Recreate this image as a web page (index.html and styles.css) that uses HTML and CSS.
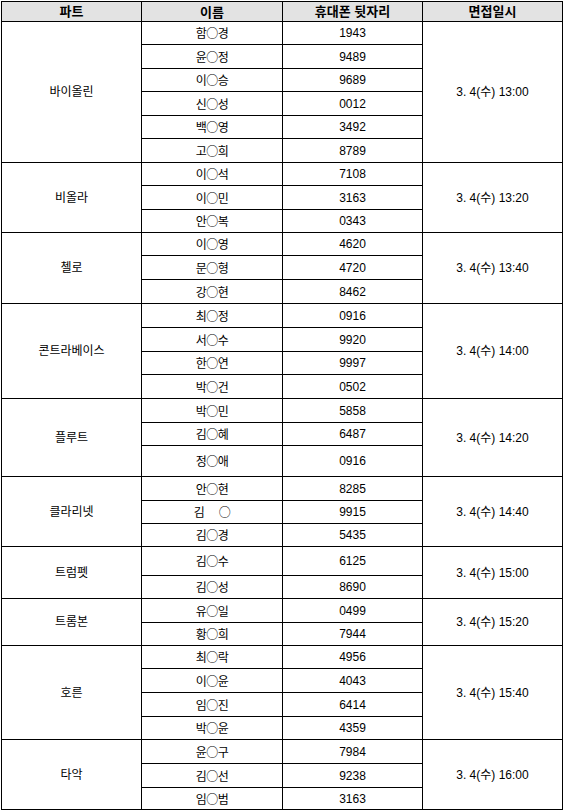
FILE: index.html
```html
<!DOCTYPE html>
<html lang="ko">
<head>
<meta charset="utf-8">
<link rel="stylesheet" href="styles.css">
</head>
<body>
<div class="sheet">
  <div class="c head part">파트</div>
  <div class="c head name">이름</div>
  <div class="c head phone">휴대폰 뒷자리</div>
  <div class="c head time">면접일시</div>

  <div class="c part span6">바이올린</div>
  <div class="c name">함○경</div><div class="c phone">1943</div>
  <div class="c time span6">3. 4(수) 13:00</div>
  <div class="c name">윤○정</div><div class="c phone">9489</div>
  <div class="c name">이○승</div><div class="c phone">9689</div>
  <div class="c name">신○성</div><div class="c phone">0012</div>
  <div class="c name">백○영</div><div class="c phone">3492</div>
  <div class="c name">고○희</div><div class="c phone">8789</div>

  <div class="c part span3">비올라</div>
  <div class="c name">이○석</div><div class="c phone">7108</div>
  <div class="c time span3">3. 4(수) 13:20</div>
  <div class="c name">이○민</div><div class="c phone">3163</div>
  <div class="c name">안○복</div><div class="c phone">0343</div>

  <div class="c part span3">첼로</div>
  <div class="c name">이○영</div><div class="c phone">4620</div>
  <div class="c time span3">3. 4(수) 13:40</div>
  <div class="c name">문○형</div><div class="c phone">4720</div>
  <div class="c name">강○현</div><div class="c phone">8462</div>

  <div class="c part span4">콘트라베이스</div>
  <div class="c name">최○정</div><div class="c phone">0916</div>
  <div class="c time span4">3. 4(수) 14:00</div>
  <div class="c name">서○수</div><div class="c phone">9920</div>
  <div class="c name">한○연</div><div class="c phone">9997</div>
  <div class="c name">박○건</div><div class="c phone">0502</div>

  <div class="c part span3">플루트</div>
  <div class="c name">박○민</div><div class="c phone">5858</div>
  <div class="c time span3">3. 4(수) 14:20</div>
  <div class="c name">김○혜</div><div class="c phone">6487</div>
  <div class="c name">정○애</div><div class="c phone">0916</div>

  <div class="c part span3">클라리넷</div>
  <div class="c name">안○현</div><div class="c phone">8285</div>
  <div class="c time span3">3. 4(수) 14:40</div>
  <div class="c name pre">김 　○</div><div class="c phone">9915</div>
  <div class="c name">김○경</div><div class="c phone">5435</div>

  <div class="c part span2">트럼펫</div>
  <div class="c name">김○수</div><div class="c phone">6125</div>
  <div class="c time span2">3. 4(수) 15:00</div>
  <div class="c name">김○성</div><div class="c phone">8690</div>

  <div class="c part span2">트롬본</div>
  <div class="c name">유○일</div><div class="c phone">0499</div>
  <div class="c time span2">3. 4(수) 15:20</div>
  <div class="c name">황○희</div><div class="c phone">7944</div>

  <div class="c part span4">호른</div>
  <div class="c name">최○락</div><div class="c phone">4956</div>
  <div class="c time span4">3. 4(수) 15:40</div>
  <div class="c name">이○윤</div><div class="c phone">4043</div>
  <div class="c name">임○진</div><div class="c phone">6414</div>
  <div class="c name">박○윤</div><div class="c phone">4359</div>

  <div class="c part span3">타악</div>
  <div class="c name">윤○구</div><div class="c phone">7984</div>
  <div class="c time span3">3. 4(수) 16:00</div>
  <div class="c name">김○선</div><div class="c phone">9238</div>
  <div class="c name">임○범</div><div class="c phone">3163</div>
</div>
</body>
</html>
```
FILE: styles.css
```css
html, body {
  margin: 0;
  padding: 0;
  background: #ffffff;
}
body {
  font-family: "Liberation Sans", "Noto Sans CJK KR", sans-serif;
  font-size: 12px;
  color: #000000;
}
.sheet {
  margin: 1px 0 0 1px;
  display: grid;
  grid-template-columns: 140px 141px 140px 140px;
  grid-template-rows: 20px 23px 24px 23px 24px 23px 24px 23px 24px 23px 23px 24px 24px 24px 24px 23px 24px 24px 23px 31px 24px 23px 23px 29px 23px 24px 23px 23px 24px 24px 23px 24px 24px 22px;
  width: 561px;
  border-left: 1px solid #000;
  border-top: 1px solid #000;
  box-sizing: content-box;
}
.c {
  box-sizing: border-box;
  border-right: 1px solid #000;
  border-bottom: 1px solid #000;
  display: flex;
  align-items: center;
  justify-content: center;
  line-height: 1;
  white-space: nowrap;
}
.head {
  background: #e3e3e3;
  font-weight: bold;
  font-size: 13px;
}
.part { grid-column: 1; }
.name {
  grid-column: 2;
  font-family: "Noto Sans CJK KR", sans-serif;
  letter-spacing: -0.5px;
}
.head.name { letter-spacing: 0; }
.phone { grid-column: 3; }
.time { grid-column: 4; }
.span2 { grid-row: span 2; }
.span3 { grid-row: span 3; }
.span4 { grid-row: span 4; }
.span6 { grid-row: span 6; }
.pre { white-space: pre; }
```
